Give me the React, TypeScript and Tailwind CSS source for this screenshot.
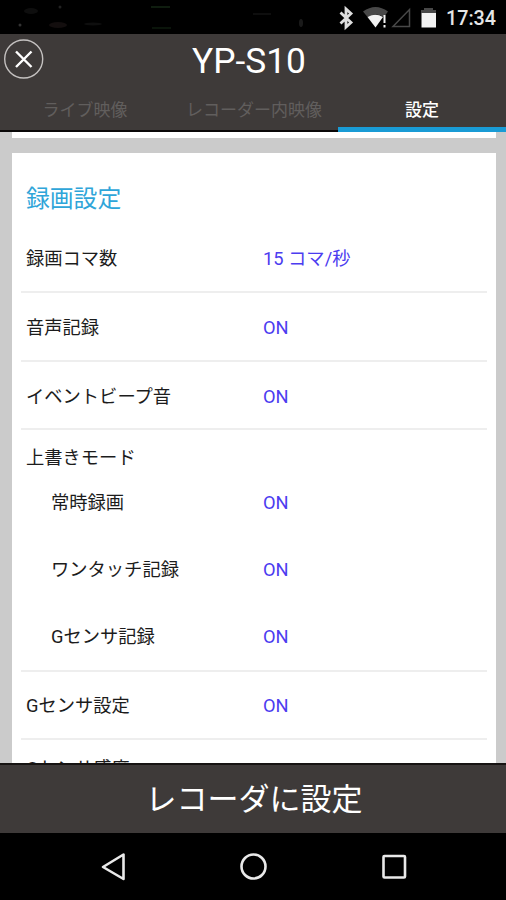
import { FC } from "react";

interface SettingRowProps {
  label: string;
  value?: string;
  className: string;
}

const tabs = [
  { label: "ライブ映像", active: false },
  { label: "レコーダー内映像", active: false },
  { label: "設定", active: true },
];

const overwriteModes = ["常時録画", "ワンタッチ記録", "Gセンサ記録"];

const SettingRow: FC<SettingRowProps> = ({ label, value, className }) => (
  <div className={`flex shrink-0 items-center text-[18.3px] leading-none ${className}`}>
    <span className="w-[237px] shrink-0 whitespace-nowrap text-[#1c1c1c]">{label}</span>
    {value && <span className="whitespace-nowrap text-[#4c3cf0]">{value}</span>}
  </div>
);

const Divider: FC = () => <div className="mx-[9px] h-[2px] shrink-0 bg-[#eeeeee]" />;

const StatusBar: FC = () => (
  <div className="h-[34px] shrink-0 bg-black">
    <svg width="506" height="34" viewBox="0 0 506 34" fill="none">
      {/* dimmed notification icons */}
      <g fill="#0e0e0e">
        <ellipse cx="31" cy="11" rx="7" ry="3" />
        <ellipse cx="58" cy="25" rx="9" ry="3" fill="#130e0e" />
        <ellipse cx="93" cy="24" rx="9" ry="1.500" />
        <rect x="151" y="6" width="19" height="2" fill="#0f1d0f" />
        <rect x="152" y="27" width="19" height="2" fill="#0a140a" />
        <rect x="253" y="13" width="18" height="2" />
        <ellipse cx="301" cy="23" rx="2" ry="4" fill="#1a1a1a" />
        <circle cx="20" cy="25" r="1.500" fill="#333" />
        <circle cx="60" cy="7" r="1.500" fill="#222" />
      </g>
      <path d="M340.500 12.500l10.500 10-5 4.500V9l5 4.500-10.500 10" stroke="#dedede" strokeWidth="2.800" />
      <path d="M363 11.500Q375.500 2.500 388 11.500L384 17Q376 12 367.500 17Z" fill="#484848" />
      <path d="M367.500 17Q375.500 12.500 383 17L375.500 27.500Z" fill="#f2f2f2" />
      <path d="M384.500 15v8M384.500 25v2.500" stroke="#f2f2f2" strokeWidth="2" />
      <path d="M409.500 9.500v17H393Z" stroke="#484848" strokeWidth="1.500" />
      <path d="M421 13v-3h3V8h9v2h3v3Z" fill="#484848" />
      <path d="M421.500 13H436v14.500h-14.500Z" fill="#f2f2f2" />
      <text x="446" y="25" fill="#e6e6e6" fontSize="19.500" fontWeight="500" textLength="50" lengthAdjust="spacingAndGlyphs">
        17:34
      </text>
    </svg>
  </div>
);

const Header: FC = () => (
  <header className="flex h-[98px] shrink-0 flex-col bg-[#3e3a39] text-white">
    <div className="grid h-[54px] grid-cols-[48px_1fr_48px] items-center">
      <button className="ml-[4px] mt-[-4px] h-[40px] w-[40px]" aria-label="close">
        <svg width="40" height="40" viewBox="0 0 40 40" fill="none">
          <circle cx="19.700" cy="20" r="19" stroke="#c4c1c0" strokeWidth="1.400" />
          <path d="M12 12.500l15.500 15.500M27.500 12.500L12 28" stroke="#fff" strokeWidth="2.400" />
        </svg>
      </button>
      <h1 className="mr-[8px] pt-px text-center text-[35.300px] leading-none">YP-S10</h1>
    </div>
    <nav className="grid h-[44px] grid-cols-[169px_169px_168px] text-[17px] leading-none">
      {tabs.map((tab) => (
        <button
          key={tab.label}
          className={
            tab.active
              ? "border-b-[5px] border-[#199bd5] pt-[5px] font-medium text-white"
              : "border-b-2 border-[#0a0808] pl-[1px] pt-[2px] text-[#615e5d]"
          }
        >
          {tab.label}
        </button>
      ))}
    </nav>
  </header>
);

const NavBar: FC = () => (
  <div className="h-[67px] shrink-0 bg-black">
    <svg width="506" height="67" viewBox="0 0 506 67" fill="none" stroke="#e9e9e9" strokeWidth="2.600">
      <path d="M123.500 21.500v24.500L103 34Z" strokeLinejoin="round" />
      <circle cx="253.500" cy="33.500" r="12" />
      <rect x="383.500" y="23" width="21.500" height="21.500" rx="1" />
    </svg>
  </div>
);

const App: FC = () => {
  return (
    <div className="flex h-[900px] w-[506px] flex-col overflow-hidden bg-[#cbcbcb] font-['Roboto','Noto_Sans_CJK_JP',sans-serif]">
      <StatusBar />
      <Header />

      <main className="flex min-h-0 flex-1 flex-col overflow-hidden pl-[12px] pr-[10px]">
        <div className="h-[6px] shrink-0 bg-white" />
        <section className="mt-[15px] flex shrink-0 flex-col bg-white">
          <h2 className="flex h-[71px] items-center pl-[14px] pt-[22px] text-[23.800px] leading-none text-[#2fa5d9]">
            録画設定
          </h2>
          <SettingRow label="録画コマ数" value="15 コマ/秒" className="h-[67px] pl-[14px] pt-[4px]" />
          <Divider />
          <SettingRow label="音声記録" value="ON" className="h-[66.500px] pl-[14px] pt-[4px]" />
          <Divider />
          <SettingRow label="イベントビープ音" value="ON" className="h-[66.500px] pl-[14px] pt-[4px]" />
          <Divider />
          <SettingRow label="上書きモード" className="h-[39px] pl-[14px] pt-[18px]" />
          {overwriteModes.map((mode) => (
            <div key={mode} className="flex h-[67px] items-center pl-[39px] pt-[2px] text-[18.300px] leading-none">
              <span className="w-[212px] whitespace-nowrap text-[#1c1c1c]">{mode}</span>
              <span className="text-[#4c3cf0]">ON</span>
            </div>
          ))}
          <Divider />
          <SettingRow label="Gセンサ設定" value="ON" className="h-[66px] pl-[14px] pt-[3px]" />
          <Divider />
          <SettingRow label="Gセンサ感度" className="h-[56px] pl-[14px] pt-[3px]" />
        </section>
      </main>

      <button className="flex h-[70px] shrink-0 items-center justify-center border-t-2 border-[#171413] bg-[#3e3a39] pl-[2px] text-[31px] leading-none text-white">
        レコーダに設定
      </button>
      <NavBar />
    </div>
  );
};

export default App;
